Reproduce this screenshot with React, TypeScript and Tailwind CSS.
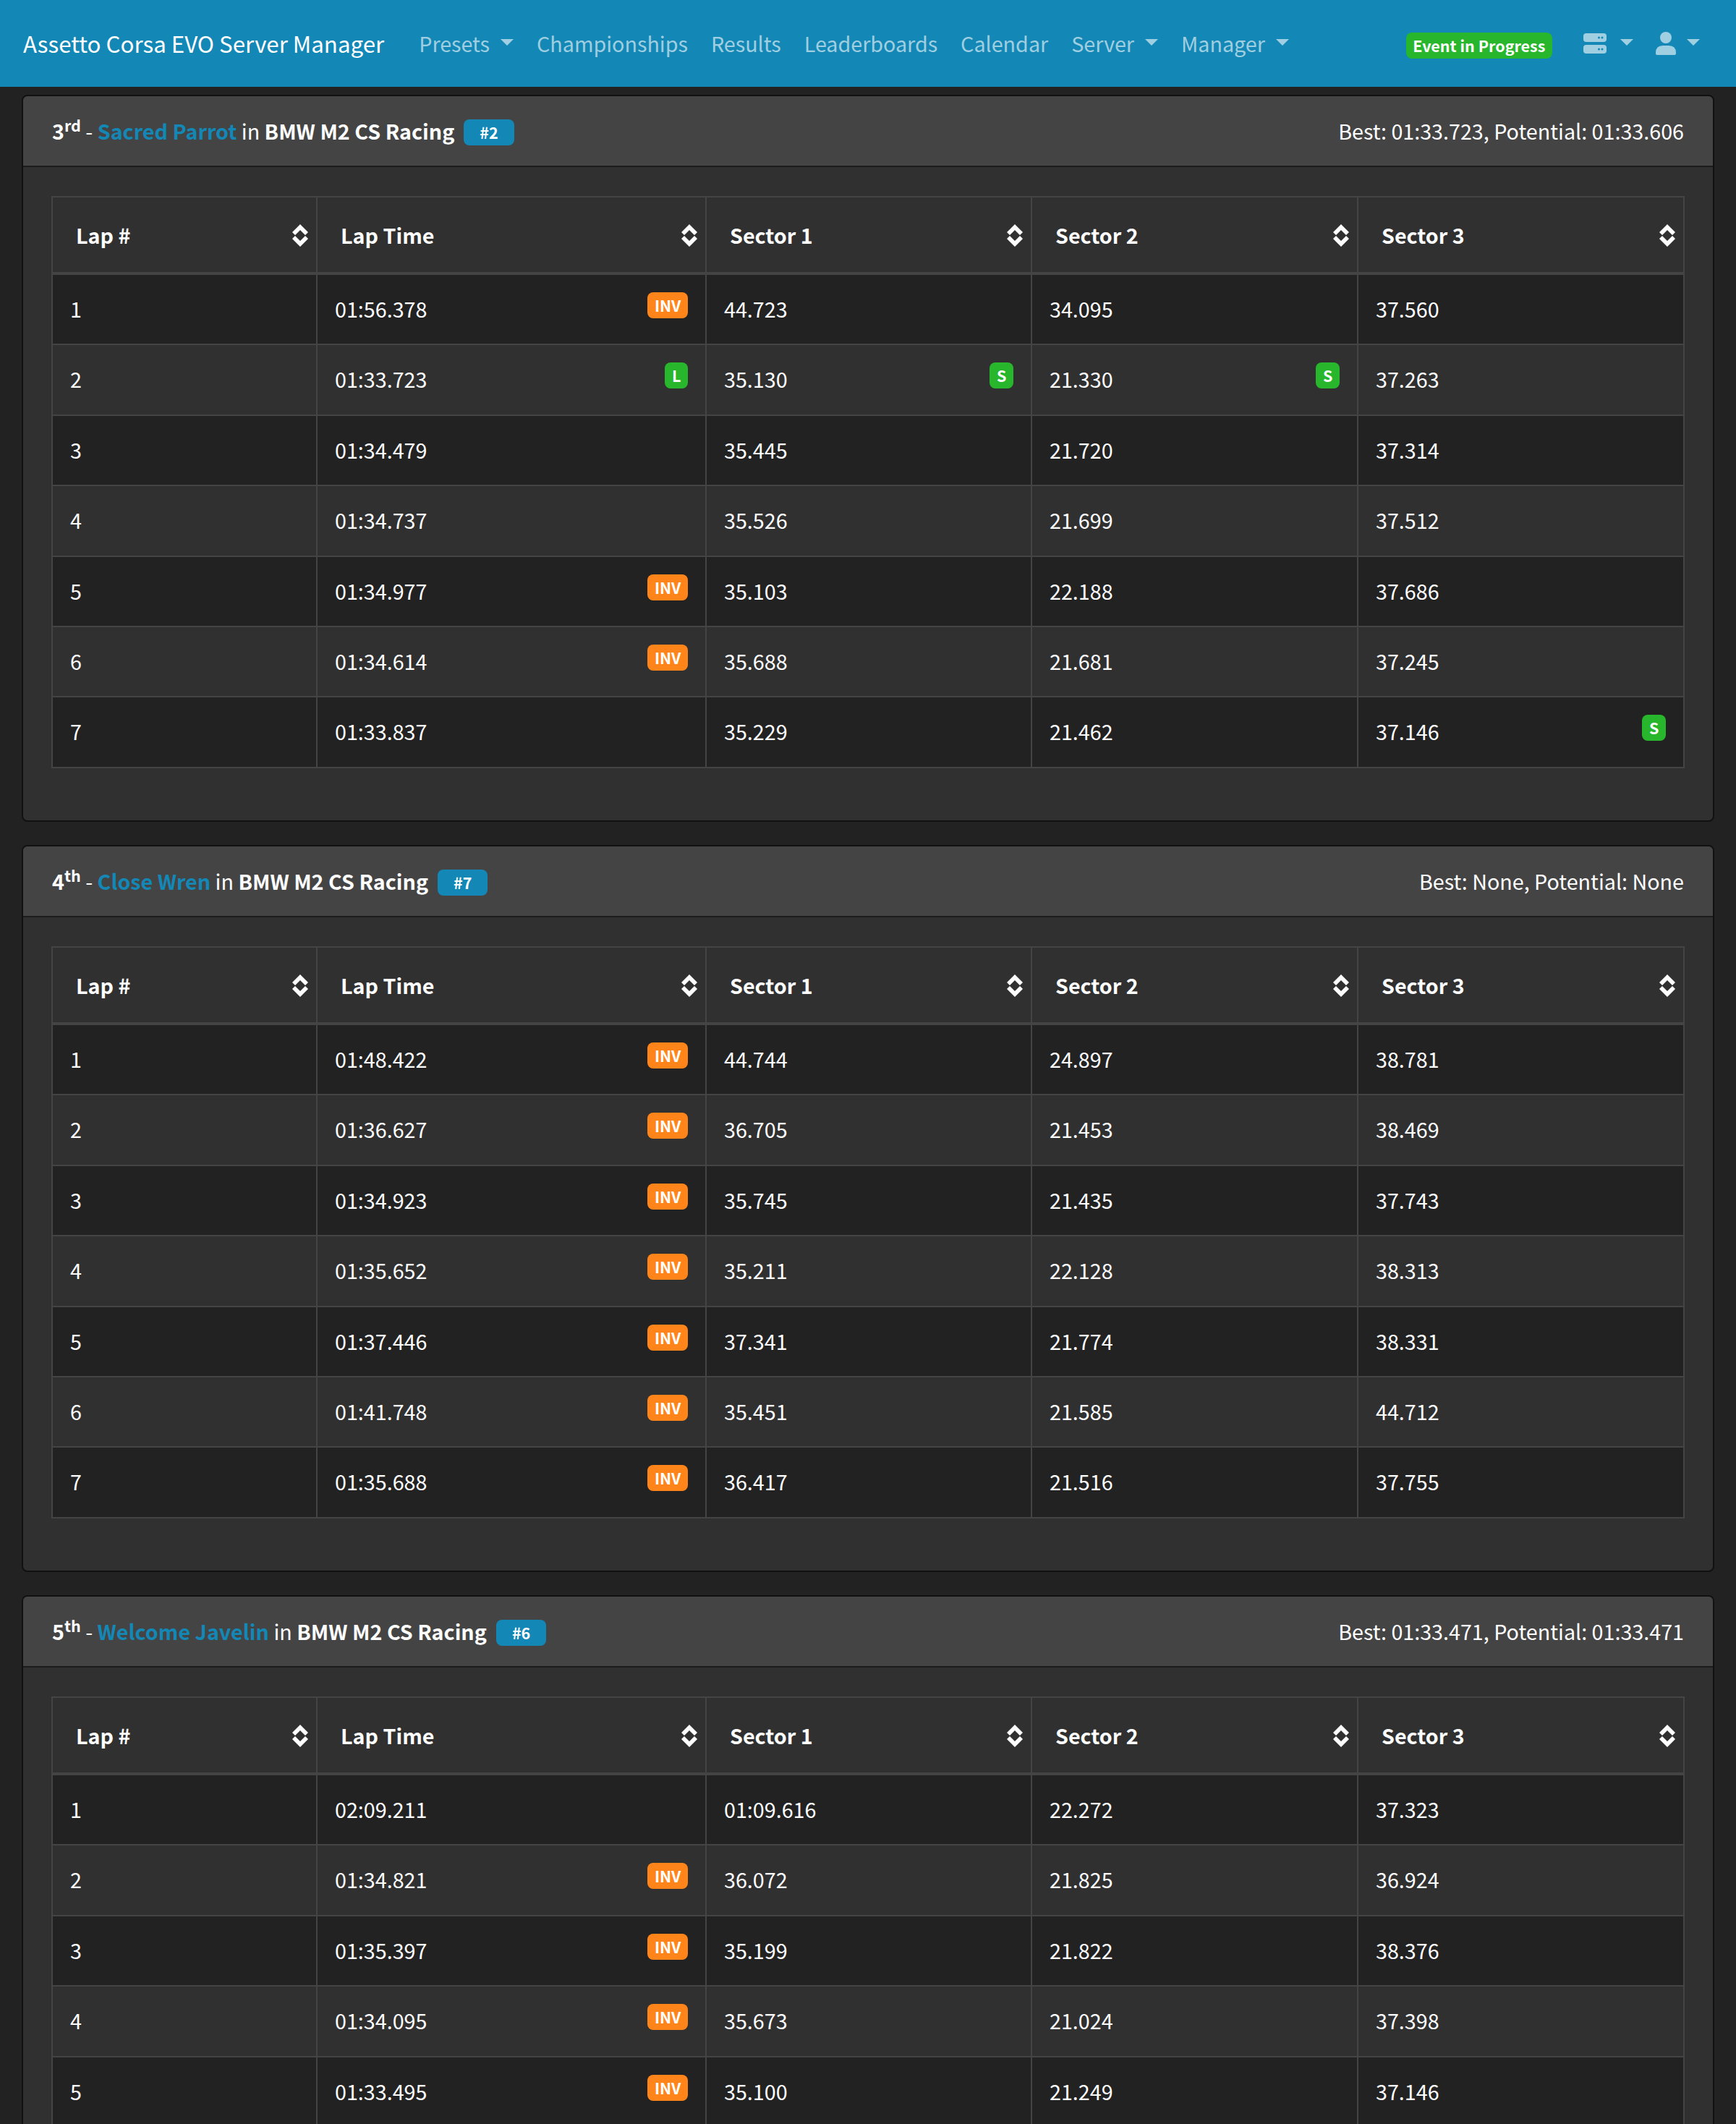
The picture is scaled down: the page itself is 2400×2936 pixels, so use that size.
const NAV = [
  { label: "Presets", caret: true },
  { label: "Championships" },
  { label: "Results" },
  { label: "Leaderboards" },
  { label: "Calendar" },
  { label: "Server", caret: true },
  { label: "Manager", caret: true },
];

type Lap = [string, string, string, string, string?];

type Entry = {
  pos: string;
  suffix: string;
  name: string;
  num: string;
  times: string;
  laps: Lap[];
};

// Flags: a lap code per column, "I" = INV, "L" = best lap, "1/2/3" = best sector
const ENTRIES: Entry[] = [
  {
    pos: "3",
    suffix: "rd",
    name: "Sacred Parrot",
    num: "#2",
    times: "Best: 01:33.723, Potential: 01:33.606",
    laps: [
      ["01:56.378", "44.723", "34.095", "37.560", "I"],
      ["01:33.723", "35.130", "21.330", "37.263", "L12"],
      ["01:34.479", "35.445", "21.720", "37.314"],
      ["01:34.737", "35.526", "21.699", "37.512"],
      ["01:34.977", "35.103", "22.188", "37.686", "I"],
      ["01:34.614", "35.688", "21.681", "37.245", "I"],
      ["01:33.837", "35.229", "21.462", "37.146", "3"],
    ],
  },
  {
    pos: "4",
    suffix: "th",
    name: "Close Wren",
    num: "#7",
    times: "Best: None, Potential: None",
    laps: [
      ["01:48.422", "44.744", "24.897", "38.781", "I"],
      ["01:36.627", "36.705", "21.453", "38.469", "I"],
      ["01:34.923", "35.745", "21.435", "37.743", "I"],
      ["01:35.652", "35.211", "22.128", "38.313", "I"],
      ["01:37.446", "37.341", "21.774", "38.331", "I"],
      ["01:41.748", "35.451", "21.585", "44.712", "I"],
      ["01:35.688", "36.417", "21.516", "37.755", "I"],
    ],
  },
  {
    pos: "5",
    suffix: "th",
    name: "Welcome Javelin",
    num: "#6",
    times: "Best: 01:33.471, Potential: 01:33.471",
    laps: [
      ["02:09.211", "01:09.616", "22.272", "37.323"],
      ["01:34.821", "36.072", "21.825", "36.924", "I"],
      ["01:35.397", "35.199", "21.822", "38.376", "I"],
      ["01:34.095", "35.673", "21.024", "37.398", "I"],
      ["01:33.495", "35.100", "21.249", "37.146", "I"],
    ],
  },
];

const COLUMNS = ["Lap #", "Lap Time", "Sector 1", "Sector 2", "Sector 3"];
const WIDTHS = ["w-[366px]", "w-[538px]", "w-[450px]", "w-[451px]", "w-[451px]"];

function Caret() {
  return (
    <span className="ml-[15px] mt-[-4px] inline-block border-x-[9.5px] border-t-[9.5px] border-x-transparent border-t-current" />
  );
}

function SortIcon() {
  return (
    <svg viewBox="0 0 22 31" className="absolute right-[11px] top-[37px] h-[31px] w-[22px] fill-white">
      <polygon points="11,0 22,11 18,15 11,8 4,15 0,11" />
      <polygon points="11,31 22,20 18,16 11,23 4,16 0,20" />
    </svg>
  );
}

function Flag({ label, color }: { label: string; color: string }) {
  return (
    <span className={`float-right mt-[1px] rounded-[8px] px-[9.6px] py-[6px] text-[21.5px] font-bold leading-[24px] text-white ${color}`}>
      {label}
    </span>
  );
}

function LapCell({ value, flag }: { value: string; flag?: "I" | "L" | "S" }) {
  return (
    <td className="border-2 border-[#444] px-[24px] pb-[25px] pt-[23px]">
      {flag === "I" && <Flag label="INV" color="bg-[#ff851b]" />}
      {flag === "L" && <Flag label="L" color="bg-[#28b62c]" />}
      {flag === "S" && <Flag label="S" color="bg-[#28b62c]" />}
      {value}
    </td>
  );
}

function LapTable({ laps }: { laps: Lap[] }) {
  return (
    <table className="ml-[-1px] w-[2256px] table-fixed border-collapse leading-[47.4px] text-white">
      <colgroup>
        {WIDTHS.map((w) => (
          <col key={w} className={w} />
        ))}
      </colgroup>
      <thead>
        <tr>
          {COLUMNS.map((c) => (
            <th
              key={c}
              className="relative h-[106px] border-x-2 border-b-[4px] border-t-2 border-[#444] pl-[32px] text-left font-bold"
            >
              {c}
              <SortIcon />
            </th>
          ))}
        </tr>
      </thead>
      <tbody>
        {laps.map((lap, i) => {
          const flags = lap[4] ?? "";
          return (
            <tr key={i} className={i % 2 === 0 ? "bg-[#222]" : "bg-[#303030]"}>
              <LapCell value={String(i + 1)} />
              <LapCell
                value={lap[0]}
                flag={flags.includes("I") ? "I" : flags.includes("L") ? "L" : undefined}
              />
              <LapCell value={lap[1]} flag={flags.includes("1") ? "S" : undefined} />
              <LapCell value={lap[2]} flag={flags.includes("2") ? "S" : undefined} />
              <LapCell value={lap[3]} flag={flags.includes("3") ? "S" : undefined} />
            </tr>
          );
        })}
      </tbody>
    </table>
  );
}

function EntryCard({ entry }: { entry: Entry }) {
  return (
    <div className="mb-[32px] h-[1005px] overflow-hidden rounded-[8px] border-2 border-[#111] bg-[#303030]">
      <div className="flex h-[98px] items-center justify-between border-b-2 border-[#1c1c1c] bg-[#444] px-[40px] text-white">
        <div className="flex items-center">
          <span>
            <b className="font-bold">
              {entry.pos}
              <sup className="relative top-[-0.5em] align-baseline text-[21.5px] leading-none">{entry.suffix}</sup>
            </b>{" "}
            - <b className="font-bold text-[#1388b6]">{entry.name}</b> in{" "}
            <b className="font-bold">BMW M2 CS Racing</b>
          </span>
          <span className="ml-[13px] mt-[4px] rounded-[8px] bg-[#1388b6] px-[22px] py-[6px] text-[21.5px] font-bold leading-[24px]">
            {entry.num}
          </span>
        </div>
        <div>{entry.times}</div>
      </div>
      <div className="px-[40px] pt-[40px]">
        <LapTable laps={entry.laps} />
      </div>
    </div>
  );
}

function Navbar() {
  return (
    <nav className="flex h-[120px] items-center whitespace-nowrap bg-[#1388b6] px-[32px] text-[28.7px] text-white/60">
      <a href="#" className="mr-[32px] text-[31.3px] leading-[48px] text-white">
        Assetto Corsa EVO Server Manager
      </a>
      {NAV.map((item) => (
        <a key={item.label} href="#" className="flex items-center px-[16px] leading-[48px]">
          {item.label}
          {item.caret && <Caret />}
        </a>
      ))}
      <div className="ml-auto flex items-center">
        <span className="mr-[27px] mt-[6px] rounded-[8px] bg-[#28b62c] px-[9.6px] py-[6px] text-[21.5px] font-bold leading-[24px] text-white">
          Event in Progress
        </span>
        <a href="#" className="flex items-center px-[16px]">
          <svg viewBox="0 0 32 28" className="mr-[4px] h-[28px] w-[32px]">
            <rect width="32" height="12" rx="4" fill="currentColor" />
            <rect y="16" width="32" height="12" rx="4" fill="currentColor" />
            <circle cx="21.5" cy="6" r="1.5" fill="#1388b6" />
            <circle cx="26" cy="6" r="1.5" fill="#1388b6" />
            <circle cx="21.5" cy="22" r="1.5" fill="#1388b6" />
            <circle cx="26" cy="22" r="1.5" fill="#1388b6" />
          </svg>
          <Caret />
        </a>
        <a href="#" className="flex items-center pl-[15px] pr-[18px]">
          <svg viewBox="0 0 28 32" className="h-[32px] w-[28px] fill-current">
            <circle cx="14" cy="8" r="8" />
            <path d="M0 29Q0 19 10 19H18Q28 19 28 29V30Q28 32 26 32H2Q0 32 0 30Z" />
          </svg>
          <Caret />
        </a>
      </div>
    </nav>
  );
}

export default function App() {
  return (
    <div className="h-[2936px] overflow-hidden bg-[#222] font-['Noto_Sans_CJK_JP',sans-serif] text-[28.7px] leading-[48px]">
      <Navbar />
      <main className="px-[30px] pt-[11px]">
        {ENTRIES.map((entry) => (
          <EntryCard key={entry.name} entry={entry} />
        ))}
      </main>
    </div>
  );
}
